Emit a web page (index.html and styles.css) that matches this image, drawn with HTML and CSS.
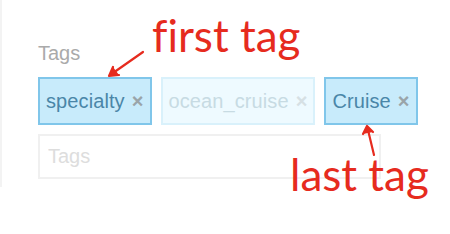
FILE: index.html
```html
<!DOCTYPE html>
<html lang="en">
<head>
    <meta charset="UTF-8">
    <meta name="viewport" content="width=device-width, initial-scale=1.0">
    <title>Tags</title>
    <link rel="stylesheet" href="styles.css">
</head>
<body>
    <div class="panel">
        <label class="field-label" for="tag-input">Tags</label>
        <div class="tag-list">
            <span class="tag">specialty<span class="tag-remove">×</span></span>
            <span class="tag tag-faded">ocean_cruise<span class="tag-remove">×</span></span>
            <span class="tag">Cruise<span class="tag-remove">×</span></span>
        </div>
        <input type="text" id="tag-input" class="tag-input" placeholder="Tags">
    </div>

    <!-- annotations -->
    <span class="note note-first">first tag</span>
    <span class="note note-last">last tag</span>
    <svg class="arrows" width="450" height="234" viewBox="0 0 450 234">
        <line x1="143" y1="52" x2="113" y2="73" />
        <polyline points="113,67 109,76 119,75" />
        <line x1="374" y1="155" x2="368" y2="130" />
        <polyline points="363,134 367,126 373,132" />
    </svg>
</body>
</html>
```

FILE: styles.css
```css
body {
    margin: 0;
    font-family: 'Liberation Sans', Arial, sans-serif;
    background-color: #ffffff;
    position: relative;
    width: 450px;
    height: 234px;
    overflow: hidden;
}
.panel {
    height: 187px;
    border-left: 2px solid #f3f3f3;
    padding: 41px 0 0 36px;
    box-sizing: border-box;
}
.field-label {
    display: block;
    font-size: 20px;
    line-height: 24px;
    color: #aaaaaa;
    margin-bottom: 12px;
}
.tag-list {
    display: flex;
    gap: 9px;
    margin-bottom: 9px;
}
.tag {
    display: flex;
    align-items: center;
    height: 48px;
    padding: 0 6px;
    box-sizing: border-box;
    border: 2px solid #80c6ea;
    background-color: #c8ebfb;
    color: #4a86a8;
    font-size: 20px;
    letter-spacing: 0.1px;
}
.tag-remove {
    margin-left: 7px;
    font-size: 20px;
    font-weight: bold;
    color: #9aa4a9;
}
.tag-faded {
    border-color: #d9f1fb;
    background-color: #eefaff;
    color: #c7dbe3;
}
.tag-faded .tag-remove {
    color: #d6e0e4;
}
.tag-input {
    display: block;
    width: 343px;
    height: 45px;
    box-sizing: border-box;
    border: 2px solid #f0f0f0;
    padding: 0 8px;
    font-family: 'Liberation Sans', Arial, sans-serif;
    font-size: 20px;
    outline: none;
}
.tag-input::placeholder {
    color: #dddddd;
}
.note {
    position: absolute;
    font-family: Lato, 'Open Sans', sans-serif;
    font-size: 44px;
    line-height: 44px;
    color: #e62b1e;
    white-space: nowrap;
    font-variant-ligatures: none;
}
.note-first {
    left: 152px;
    top: 13px;
}
.note-last {
    left: 290px;
    top: 152px;
}
.arrows {
    position: absolute;
    left: 0;
    top: 0;
    fill: none;
    stroke: #e62b1e;
    stroke-width: 2.2;
    stroke-linecap: round;
    stroke-linejoin: round;
}
.arrows polyline {
    fill: #e62b1e;
}
```
